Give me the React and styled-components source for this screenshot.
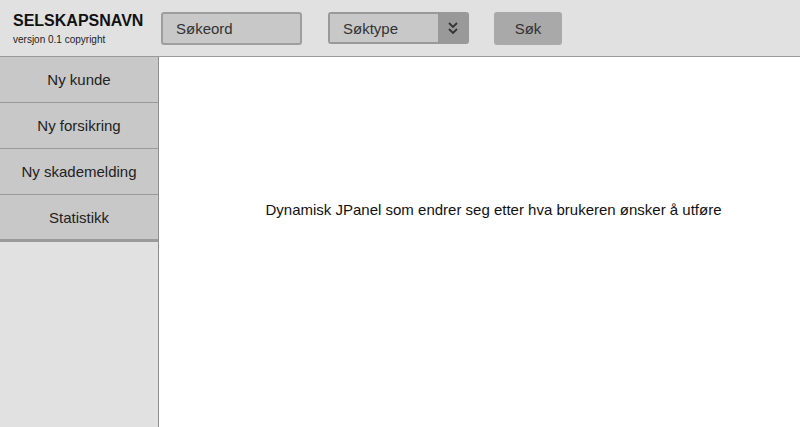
import React from "react"
import styled, { createGlobalStyle } from "styled-components"

const GlobalStyle = createGlobalStyle`
  html, body {
    margin: 0;
    padding: 0;
    background: #ffffff;
    font-family: "Liberation Sans", Arial, sans-serif;
  }
`

const Page = styled.div`
  width: 800px;
  height: 427px;
  display: flex;
  flex-direction: column;
  overflow: hidden;
`

const Header = styled.header`
  height: 56px;
  flex-shrink: 0;
  background: #e1e1e1;
  border-bottom: 1px solid #9a9a9a;
  display: flex;
  align-items: center;
`

const Brand = styled.div`
  width: 148px;
  padding-left: 13px;
  display: flex;
  flex-direction: column;
  & h1 {
    margin: 0;
    font-size: 16px;
    font-weight: bold;
    color: #111;
    line-height: 18px;
  }
  & p {
    margin: 4px 0 0;
    font-size: 10px;
    color: #222;
  }
`

const SearchBox = styled.div`
  background: #c8c8c8;
  border: 2px solid #9e9e9e;
  border-radius: 3px;
  display: flex;
  align-items: center;
  padding-left: 13px;
  box-sizing: border-box;
  width: 141px;
  height: 33px;
  font-size: 15px;
  color: #333;
`

const Select = styled.div`
  margin-left: 26px;
  width: 141px;
  height: 32px;
  border: 2px solid #999;
  border-radius: 3px;
  box-sizing: border-box;
  display: flex;
  overflow: hidden;
  font-size: 15px;
  color: #333;
`

const SelectLabel = styled.div`
  flex: 1;
  background: #c8c8c8;
  display: flex;
  align-items: center;
  padding-left: 13px;
`

const SelectArrow = styled.div`
  width: 29px;
  background: #999;
  display: flex;
  align-items: center;
  justify-content: center;
`

const Button = styled.div`
  margin-left: 25px;
  width: 68px;
  height: 33px;
  background: #a9a9a9;
  border-radius: 3px;
  display: flex;
  align-items: center;
  justify-content: center;
  font-size: 15px;
  color: #333;
`

const Body = styled.div`
  flex: 1;
  display: flex;
`

const Sidebar = styled.nav`
  width: 158px;
  background: #e1e1e1;
  border-right: 1px solid #8e8e8e;
  display: flex;
  flex-direction: column;
`

const MenuItem = styled.div`
  height: ${p => (p.$last ? "44px" : "45px")};
  background: #c8c8c8;
  border-bottom: ${p => (p.$last ? "3px solid #9a9a9a" : "1px solid #9a9a9a")};
  display: flex;
  align-items: center;
  justify-content: center;
  font-size: 15px;
  color: #222;
`

const Content = styled.main`
  flex: 1;
  background: #fff;
  display: flex;
  justify-content: center;
  padding: 144px 0 0 28px;
  font-size: 15px;
  color: #111;
`

const menu = ["Ny kunde", "Ny forsikring", "Ny skademelding", "Statistikk"]

export default function App() {
  return (
    <Page>
      <GlobalStyle />
      <Header>
        <Brand>
          <h1>SELSKAPSNAVN</h1>
          <p>versjon 0.1 copyright</p>
        </Brand>
        <SearchBox>Søkeord</SearchBox>
        <Select>
          <SelectLabel>Søktype</SelectLabel>
          <SelectArrow>
            <svg width="12" height="14" viewBox="0 0 12 14">
              <path d="M2 2 L6 6 L10 2 M2 8 L6 12 L10 8" stroke="#333" strokeWidth="1.8" fill="none" />
            </svg>
          </SelectArrow>
        </Select>
        <Button>Søk</Button>
      </Header>
      <Body>
        <Sidebar>
          {menu.map((m, i) => (
            <MenuItem key={m} $last={i === menu.length - 1}>{m}</MenuItem>
          ))}
        </Sidebar>
        <Content>Dynamisk JPanel som endrer seg etter hva brukeren ønsker å utføre</Content>
      </Body>
    </Page>
  )
}
